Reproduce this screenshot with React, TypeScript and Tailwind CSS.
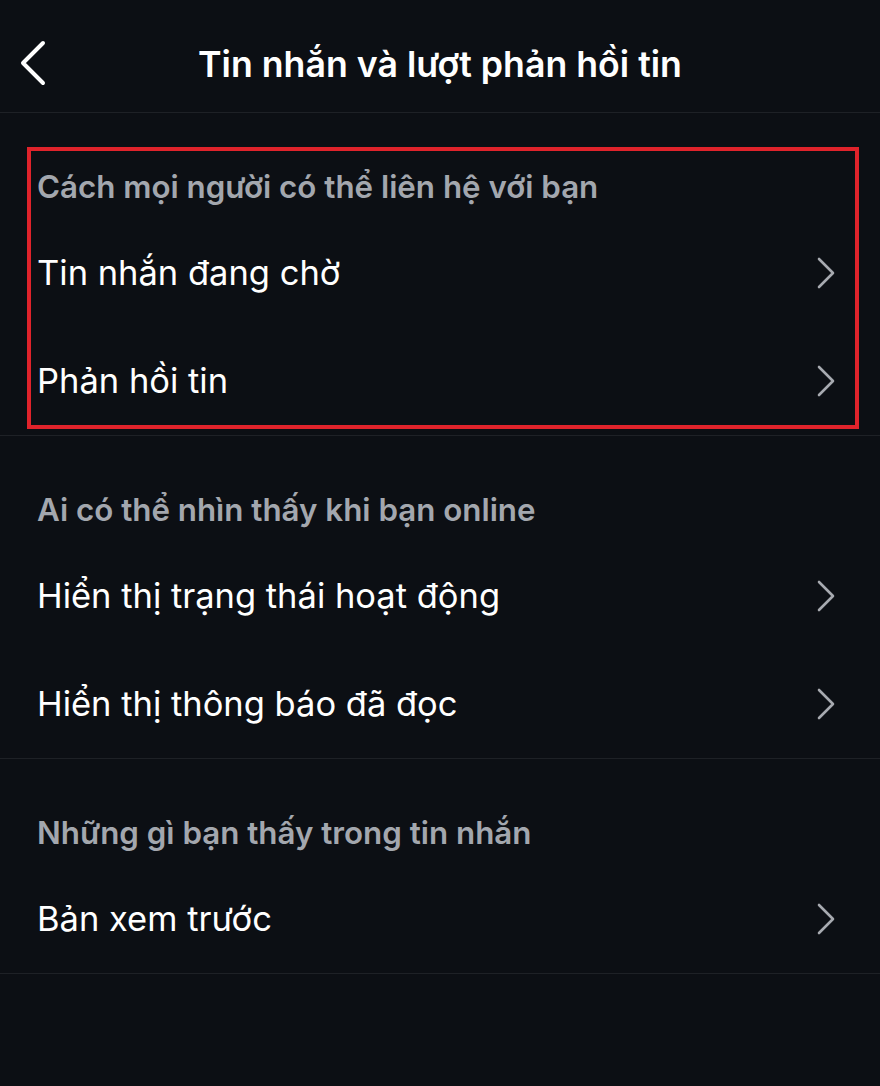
import React from "react";

type Section = {
  title: string;
  items: string[];
  highlighted?: boolean;
};

const sections: Section[] = [
  {
    title: "Cách mọi người có thể liên hệ với bạn",
    items: ["Tin nhắn đang chờ", "Phản hồi tin"],
    highlighted: true,
  },
  {
    title: "Ai có thể nhìn thấy khi bạn online",
    items: ["Hiển thị trạng thái hoạt động", "Hiển thị thông báo đã đọc"],
  },
  {
    title: "Những gì bạn thấy trong tin nhắn",
    items: ["Bản xem trước"],
  },
];

function Chevron() {
  return (
    <svg width="20" height="32" viewBox="0 0 20 32" fill="none" className="shrink-0">
      <path
        d="M3 2 L17 16 L3 30"
        stroke="#a7aab0"
        strokeWidth="2.6"
        strokeLinecap="round"
        strokeLinejoin="round"
      />
    </svg>
  );
}

function BackArrow() {
  return (
    <svg width="30" height="46" viewBox="0 0 30 46" fill="none">
      <path
        d="M25 3 L5 23 L25 43"
        stroke="#ffffff"
        strokeWidth="4"
        strokeLinecap="round"
        strokeLinejoin="round"
      />
    </svg>
  );
}

export default function App() {
  return (
    <div
      className="min-h-[1086px] w-[880px] bg-[#0c0f14] text-white"
      style={{ fontFamily: 'Inter, "Liberation Sans", Arial, sans-serif' }}
    >
      {/* top bar */}
      <div className="relative flex h-[113px] items-center justify-center border-b border-[#1e2126] pt-[16px]">
        <button className="absolute left-[18px] top-[40px]">
          <BackArrow />
        </button>
        <h1 className="text-[35.7px] font-semibold leading-[42px]">Tin nhắn và lượt phản hồi tin</h1>
      </div>

      {sections.map((s) => (
        <div key={s.title} className="relative border-b border-[#1e2126]">
          <div className="flex h-[106px] items-end pb-[14px] pl-[37px]">
            <span className="text-[31.3px] font-semibold leading-[36px] text-[#a3a7ae]">{s.title}</span>
          </div>
          {s.items.map((it) => (
            <div key={it} className="flex h-[108px] items-center justify-between pl-[37px] pr-[44px]">
              <span className="text-[34.5px] leading-[40px] text-white">{it}</span>
              <Chevron />
            </div>
          ))}
          {s.highlighted && (
            <div className="pointer-events-none absolute left-[27px] top-[34px] h-[282px] w-[832px] border-[4px] border-[#e0232b]" />
          )}
        </div>
      ))}
    </div>
  );
}
